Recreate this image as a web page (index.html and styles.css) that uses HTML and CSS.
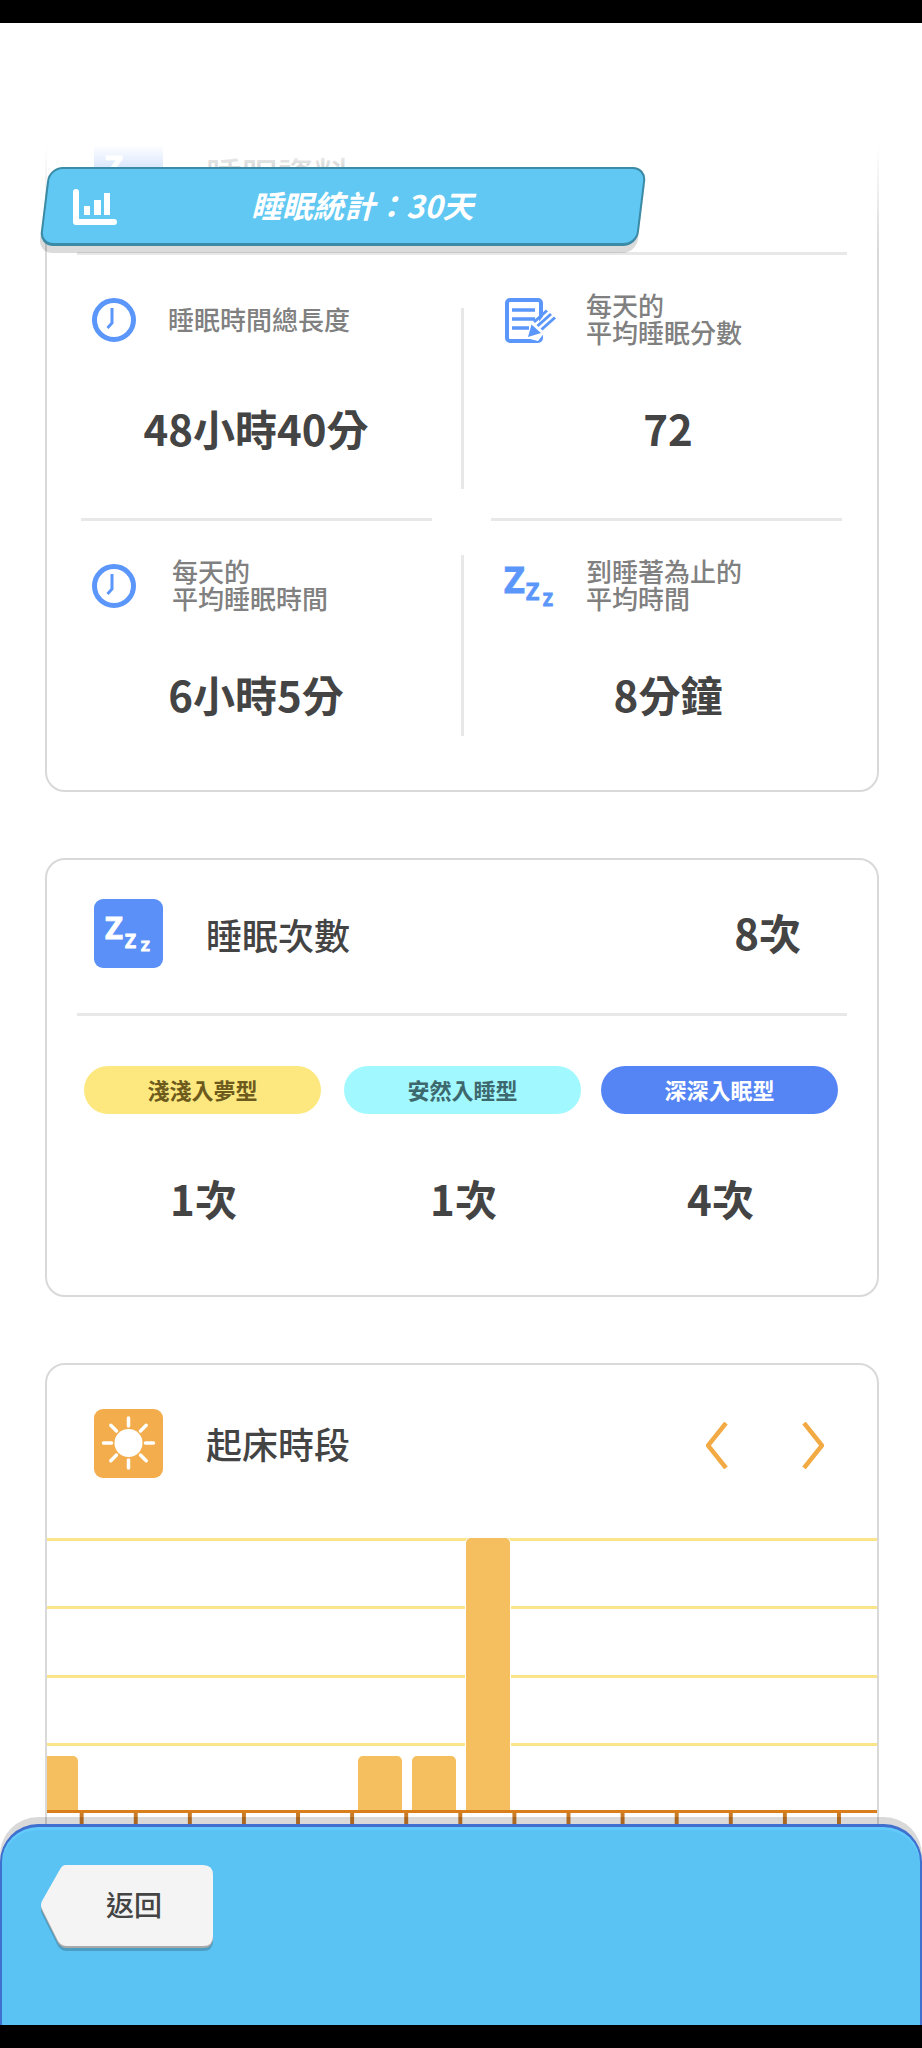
FILE: index.html
```html
<!DOCTYPE html>
<html lang="zh-Hant">
<head>
<meta charset="utf-8">
<title>睡眠統計</title>
<link rel="stylesheet" href="styles.css">
</head>
<body>
<div class="screen">
  <div class="black-bar"></div>
  <main class="main">

    <section class="card">
      <div class="card-head">
        <div class="tile tile-blue">
          <svg width="69" height="69" viewBox="0 0 69 69"><g class="zzz" fill="#fff" stroke="#fff"><text x="11" y="40" font-size="31">Z</text><text x="31" y="49" font-size="19">Z</text><text x="47" y="52" font-size="15">Z</text></g></svg>
        </div>
        <h2 class="card-title">睡眠資料</h2>
      </div>
      <div class="divider"></div>

      <div class="stat-row stat-row-first">
        <div class="stat stat-left">
          <div class="stat-head">
            <svg width="44" height="44" viewBox="0 0 44 44"><circle cx="22" cy="22" r="19.500" fill="none" stroke="#5b96fb" stroke-width="5"/><path d="M20 10V25L15.500 30" fill="none" stroke="#5b96fb" stroke-width="3"/></svg>
            <div class="stat-label">睡眠時間總長度</div>
          </div>
          <div class="stat-value">48小時40分</div>
        </div>
        <div class="vline"></div>
        <div class="stat stat-right">
          <div class="stat-head">
            <svg width="51" height="45" viewBox="0 0 51 45">
              <rect x="2" y="2" width="34" height="41" rx="3" fill="#fff" stroke="#5b96fb" stroke-width="4"/>
              <path d="M7 12H30M7 21H30M7 30H24" stroke="#5b96fb" stroke-width="3.500"/>
              <path d="M21 40L44 11L51 20L33 43Z" fill="#fff"/>
              <path d="M29 24L42 12.500M32.500 28L46 16M36.500 31.500L50 19.500" stroke="#5b96fb" stroke-width="3"/>
              <path d="M23 39L26.500 26.500L36 35Z" fill="#5b96fb"/>
            </svg>
            <div class="stat-label">每天的<br>平均睡眠分數</div>
          </div>
          <div class="stat-value">72</div>
        </div>
      </div>

      <div class="hr-pair"><span></span><span></span></div>

      <div class="stat-row stat-row-second">
        <div class="stat stat-left">
          <div class="stat-head stat-head-wide">
            <svg width="44" height="44" viewBox="0 0 44 44"><circle cx="22" cy="22" r="19.500" fill="none" stroke="#5b96fb" stroke-width="5"/><path d="M20 10V25L15.500 30" fill="none" stroke="#5b96fb" stroke-width="3"/></svg>
            <div class="stat-label">每天的<br>平均睡眠時間</div>
          </div>
          <div class="stat-value">6小時5分</div>
        </div>
        <div class="vline"></div>
        <div class="stat stat-right">
          <div class="stat-head">
            <svg class="zzz-icon" width="48" height="39" viewBox="0 0 48 39"><g class="zzz" fill="#5b96fb" stroke="#5b96fb"><text x="-1" y="26" font-size="36">Z</text><text x="21" y="33" font-size="23">Z</text><text x="38" y="39" font-size="17">Z</text></g></svg>
            <div class="stat-label">到睡著為止的<br>平均時間</div>
          </div>
          <div class="stat-value">8分鐘</div>
        </div>
      </div>
    </section>

    <section class="card">
      <div class="card-head">
        <div class="tile tile-blue">
          <svg width="69" height="69" viewBox="0 0 69 69"><g class="zzz" fill="#fff" stroke="#fff"><text x="11" y="40" font-size="31">Z</text><text x="31" y="49" font-size="19">Z</text><text x="47" y="52" font-size="15">Z</text></g></svg>
        </div>
        <h2 class="card-title">睡眠次數</h2>
        <div class="head-value">8次</div>
      </div>
      <div class="divider"></div>
      <div class="types">
        <div class="type">
          <div class="pill pill-yellow">淺淺入夢型</div>
          <div class="type-count">1次</div>
        </div>
        <div class="type">
          <div class="pill pill-cyan">安然入睡型</div>
          <div class="type-count">1次</div>
        </div>
        <div class="type">
          <div class="pill pill-blue">深深入眠型</div>
          <div class="type-count">4次</div>
        </div>
      </div>
    </section>

    <section class="card card-chart">
      <div class="card-head card-head-chart">
        <div class="tile tile-orange">
          <svg width="69" height="69" viewBox="0 0 69 69">
            <circle cx="34.500" cy="34" r="14" fill="#fff"/>
            <path d="M34.500 9V17M34.500 51V59M9.500 34H17.500M51.500 34H59.500M16.800 16.300L22.500 22M46.500 46L52.200 51.700M52.200 16.300L46.500 22M22.500 46L16.800 51.700" stroke="#fff" stroke-width="3.500" stroke-linecap="round"/>
          </svg>
        </div>
        <h2 class="card-title">起床時段</h2>
        <div class="arrows">
          <svg width="22" height="47" viewBox="0 0 22 47"><path d="M20 1L2 23.500L20 46" fill="none" stroke="#f2aa44" stroke-width="4.500"/></svg>
          <svg width="22" height="47" viewBox="0 0 22 47"><path d="M2 1L20 23.500L2 46" fill="none" stroke="#f2aa44" stroke-width="4.500"/></svg>
        </div>
      </div>
      <div class="chart">
        <div class="col"><div class="bar" style="height:20%"></div></div>
        <div class="col"></div>
        <div class="col"></div>
        <div class="col"></div>
        <div class="col"></div>
        <div class="col"></div>
        <div class="col"><div class="bar" style="height:20%"></div></div>
        <div class="col"><div class="bar" style="height:20%"></div></div>
        <div class="col"><div class="bar" style="height:100%"></div></div>
        <div class="col"></div>
        <div class="col"></div>
        <div class="col"></div>
        <div class="col"></div>
        <div class="col"></div>
        <div class="col"></div>
        <div class="col"></div>
      </div>
      <div class="ticks"></div>
    </section>

    <div class="fade"></div>

    <div class="banner">
      <svg width="44" height="36" viewBox="0 0 44 36">
        <path d="M3 3V33H41" fill="none" stroke="#fff" stroke-width="6" stroke-linecap="round" stroke-linejoin="round"/>
        <path d="M11 17h6v9h-6zM21 11h7v15h-7zM31 4h6v22h-6z" fill="#fff"/>
      </svg>
      <div class="banner-title">睡眠統計：30天</div>
    </div>

    <footer class="footer">
      <button class="back">
        <svg class="back-shape" width="172" height="87" viewBox="0 0 172 87">
          <path transform="translate(0 5)" fill="#4d9cc2" d="M24 0H162Q172 0 172 10V71Q172 81 162 81H26Q20 81 17 76L1 44Q-1 40 1 36L18 6Q21 0 24 0Z"/>
          <path transform="translate(0 2)" fill="#a9a9a9" d="M24 0H162Q172 0 172 10V71Q172 81 162 81H26Q20 81 17 76L1 44Q-1 40 1 36L18 6Q21 0 24 0Z"/>
          <path fill="#f4f4f4" d="M24 0H162Q172 0 172 10V71Q172 81 162 81H26Q20 81 17 76L1 44Q-1 40 1 36L18 6Q21 0 24 0Z"/>
        </svg>
        <span class="back-text">返回</span>
      </button>
    </footer>
  </main>
  <div class="black-bar"></div>
</div>
</body>
</html>
```

FILE: styles.css
```css
* {
  box-sizing: border-box;
}

html, body {
  margin: 0;
  padding: 0;
  background: #000;
}

body {
  font-family: "Noto Sans CJK TC", "Noto Sans", sans-serif;
  color: #444;
}

.screen {
  width: 922px;
  height: 2048px;
  display: flex;
  flex-direction: column;
  overflow: hidden;
}

.black-bar {
  height: 23px;
  flex: none;
  background: #000;
}

.main {
  position: relative;
  flex: 1;
  overflow: hidden;
  background: #fff;
  padding: 74px 43px 0 45px;
}

/* cards */
.card {
  border: 2px solid #d9d9d9;
  border-radius: 20px;
  margin-bottom: 66px;
  background: #fff;
}

.card-head {
  display: flex;
  align-items: center;
  padding: 39px 76px 45px 47px;
}

.card-head-chart {
  padding: 44px 40px 60px 47px;
}

.card-title {
  margin: 1px 0 0 43px;
  font-size: 36px;
  line-height: 48px;
  font-weight: 500;
}

.card-head-chart .card-title {
  margin-top: -2px;
}

.head-value {
  margin-left: auto;
  margin-top: -4px;
  font-size: 42px;
  line-height: 60px;
  font-weight: 700;
}

.tile {
  width: 69px;
  height: 69px;
  border-radius: 9px;
  flex: none;
}

.tile svg {
  display: block;
}

.tile-blue {
  background: #5a90f7;
}

.tile-orange {
  background: #f3ad4c;
}

.zzz {
  font-family: "Noto Sans", sans-serif;
  font-weight: 700;
  stroke-width: 0.8px;
}

.zzz-icon {
  overflow: visible;
}

.divider {
  height: 3px;
  margin: 0 30px;
  background: #e8e8e8;
}

/* stat grid */
.stat-row {
  display: flex;
}

.stat-row-first {
  height: 263px;
}

.stat-row-second {
  height: 269px;
}

.stat {
  padding-top: 34px;
}

.stat-left {
  flex: 0 0 414px;
}

.stat-right {
  flex: 1;
}

.stat-head {
  display: grid;
  align-items: center;
  height: 62px;
}

.stat-left .stat-head {
  grid-template-columns: 76px 1fr;
  padding-left: 45px;
}

.stat-left .stat-head-wide {
  grid-template-columns: 80px 1fr;
}

.stat-right .stat-head {
  grid-template-columns: 81px 1fr;
  padding-left: 41px;
}

.stat-label {
  margin-bottom: 4px;
  font-size: 26px;
  line-height: 27px;
  font-weight: 500;
  color: #808080;
}

.stat-value {
  margin-top: 47px;
  font-size: 42px;
  line-height: 60px;
  font-weight: 700;
  text-align: center;
}

.stat-left .stat-value {
  padding-left: 4px;
}

.stat-right .stat-value {
  padding-right: 5px;
}

.vline {
  flex: none;
  width: 3px;
  background: #e8e8e8;
}

.stat-row-first .vline {
  margin: 53px 0 29px;
}

.stat-row-second .vline {
  margin: 34px 0 54px;
}

.hr-pair {
  display: flex;
  gap: 59px;
  padding-left: 34px;
}

.hr-pair span {
  width: 351px;
  height: 3px;
  background: #e8e8e8;
}

/* sleep types */
.types {
  display: flex;
  gap: 20px;
  padding: 50px 0 65px 37px;
}

.type {
  width: 237px;
  text-align: center;
}

.type:nth-child(2) {
  margin-left: 3px;
}

.pill {
  height: 48px;
  border-radius: 24px;
  font-size: 22px;
  line-height: 46px;
  font-weight: 700;
}

.pill-yellow {
  background: #fde87f;
  color: #6d5a1d;
}

.pill-cyan {
  background: #a2f8ff;
  color: #3d696e;
}

.pill-blue {
  background: #5585f5;
  color: #fff;
}

.type-count {
  margin: 54px 0 2px;
  padding-left: 2px;
  font-size: 42px;
  line-height: 60px;
  font-weight: 700;
}

/* chart */
.card-chart {
  overflow: hidden;
  margin-bottom: 0;
}

.arrows {
  display: flex;
  gap: 74px;
  margin-left: auto;
  margin-top: 4px;
  padding-right: 13px;
}

.chart {
  display: flex;
  align-items: flex-end;
  height: 275px;
  border-bottom: 3px solid #d97e1a;
  background: repeating-linear-gradient(to bottom, #fbe58a 0, #fbe58a 3px, transparent 3px, transparent 68.33px);
  overflow: hidden;
}

.col {
  flex: 0 0 54.1px;
  height: 100%;
  display: flex;
  align-items: flex-end;
  padding: 0 5px;
}

.col:first-child {
  flex-basis: 35.5px;
  padding-left: 0;
}

.bar {
  flex: 1;
  background: #f5bf5f;
  border-radius: 5px 5px 0 0;
  box-shadow: 1px 0 0 #fff, -1px 0 0 #fff;
}

.col:first-child .bar {
  border-top-left-radius: 0;
}

.ticks {
  height: 30px;
  background: linear-gradient(to right, #c97a25 4px, transparent 4px) 32.7px 0 / 54.1px 12px repeat-x;
}

/* overlays */
.fade {
  position: absolute;
  top: 0;
  left: 0;
  right: 0;
  height: 227px;
  background: linear-gradient(to bottom, #fff 122px, rgba(255, 255, 255, 0) 227px);
}

.banner {
  position: absolute;
  top: 144px;
  left: 44px;
  width: 598px;
  height: 79px;
  display: flex;
  align-items: center;
  padding-left: 29px;
}

.banner::before {
  content: "";
  position: absolute;
  inset: 0;
  background: #60c8f2;
  border: 2px solid #3b8aa6;
  border-bottom-width: 3px;
  border-radius: 14px;
  transform: skewX(-7deg);
  box-shadow: 0 7px 0 rgba(0, 0, 0, 0.14);
}

.banner svg,
.banner-title {
  position: relative;
}

.banner-title {
  margin: -4px 0 0 134px;
  font-size: 31px;
  font-style: italic;
  font-weight: 700;
  color: #fff;
}

.footer {
  position: absolute;
  left: 0;
  right: 0;
  bottom: 0;
  height: 201px;
  padding: 38px 0 0 39px;
  background: #5ac3f3;
  border: solid #3f6fcf;
  border-width: 3px 2px 0;
  border-radius: 38px 38px 0 0;
  box-shadow: 0 -7px 0 rgba(0, 0, 0, 0.15), inset 0 3px 0 #62cbfb;
}

.back {
  position: relative;
  display: block;
  width: 172px;
  height: 81px;
  padding: 0 0 4px 14px;
  border: none;
  background: none;
  font-family: inherit;
  color: #444;
}

.back-shape {
  position: absolute;
  top: 0;
  left: 0;
}

.back-text {
  position: relative;
  font-size: 28px;
  font-weight: 500;
}
```
